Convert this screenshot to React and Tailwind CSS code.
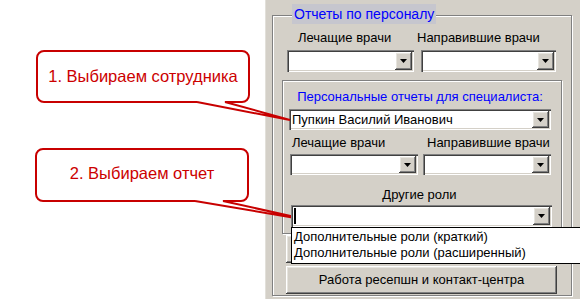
import React from "react";

const raised =
  "bg-[#d4d0c8] shadow-[inset_-1px_-1px_0_#404040,inset_1px_1px_0_#fff,inset_-2px_-2px_0_#808080,inset_2px_2px_0_#e6e4de]";
const sunken =
  "bg-white shadow-[inset_1px_1px_0_#808080,inset_2px_2px_0_#404040,inset_-1px_-1px_0_#fff,inset_-2px_-2px_0_#d4d0c8]";
const etched = "border border-[#808080] shadow-[inset_1px_1px_0_#fff,1px_1px_0_#fff]";

function Combo({ className = "", text, caret, children }) {
  return (
    <div className={`relative flex p-[2px] ${sunken} ${className}`}>
      <div className="flex-1 flex items-center pl-[1px] text-[13px] leading-[16px] text-black whitespace-nowrap overflow-hidden">
        {caret && <div className="w-[2px] h-[16px] bg-black" />}
        {text}
      </div>
      <div className={`w-[17px] flex items-center justify-center ${raised}`}>
        <svg width="7" height="4" viewBox="0 0 7 4">
          <path d="M0 0h7L3.5 4z" fill="#000" />
        </svg>
      </div>
      {children}
    </div>
  );
}

function Callout({ className = "", children }) {
  return (
    <div
      className={`w-[214px] border-2 border-[#c80000] rounded-[8px] flex items-center justify-center text-[16.5px] text-[#cc0000] bg-white ${className}`}
    >
      {children}
    </div>
  );
}

export default function App() {
  return (
    <div className="relative w-[580px] h-[299px] overflow-hidden bg-white flex font-['Liberation_Sans',Arial,sans-serif]">
      {/* подсказки слева */}
      <div className="w-[265px] flex flex-col">
        <Callout className="mt-[50px] ml-[36px] h-[53px]">1. Выбираем сотрудника</Callout>
        <Callout className="mt-[45px] ml-[35px] h-[54px] pb-[4px]">2. Выбираем отчет</Callout>
      </div>

      {/* форма */}
      <div className="w-[315px] h-[299px] bg-[#d4d0c8] pt-[15px] pl-[7px] border-l border-[#e2e0da]">
        <div className={`w-[300px] h-[281px] -ml-px flex flex-col ${etched}`}>
          <div className="-mt-[12px] ml-[19px] w-fit h-[20px] px-[2px] bg-[#c6c6ce] text-[#0000ff] text-[14px] leading-[20px]">
            Отчеты по персоналу
          </div>

          <div className="mt-[6px] flex text-[13px] leading-[16px] text-black">
            <div className="w-[144px] pl-[25px]">Лечащие врачи</div>
            <div>Направившие врачи</div>
          </div>
          <div className="mt-[4px] ml-[14px] flex">
            <Combo className="w-[127px] h-[22px]" />
            <Combo className="ml-[7px] w-[135px] h-[22px]" />
          </div>

          <div className={`mt-[8px] ml-[9px] w-[280px] h-[154px] flex flex-col ${etched}`}>
            <div className="mt-[8px] pr-[4px] text-center text-[13px] leading-[16px] text-[#0000ff]">
              Персональные отчеты для специалиста:
            </div>
            <Combo className="mt-[4px] ml-[6px] w-[262px] h-[21px]" text="Пупкин Василий Иванович" />
            <div className="mt-[5px] flex text-[13px] leading-[16px] text-black">
              <div className="w-[144px] pl-[9px]">Лечащие врачи</div>
              <div>Направившие врачи</div>
            </div>
            <div className="mt-[3px] ml-[7px] flex">
              <Combo className="w-[128px] h-[21px]" />
              <Combo className="ml-[5px] w-[128px] h-[21px]" />
            </div>
            <div className="mt-[12px] pr-[5px] text-center text-[13px] leading-[16px] text-black">Другие роли</div>
            <Combo className="mt-[2px] ml-[8px] w-[261px] h-[22px] z-10" caret>
              <div className="absolute left-0 top-full w-[300px] h-[37px] bg-white border border-black pl-[2px] pt-[1px] text-[13px] leading-[16px] text-black whitespace-nowrap">
                <div>Дополнительные роли (краткий)</div>
                <div>Дополнительные роли (расширенный)</div>
              </div>
            </Combo>
          </div>

          <div className={`mt-[1px] ml-[13px] w-[271px] h-[28px] ${raised}`} />
          <div
            className={`mt-[3px] ml-[13px] w-[271px] h-[28px] flex items-center justify-center text-[13px] text-black ${raised}`}
          >
            Работа ресепшн и контакт-центра
          </div>
        </div>
      </div>

      {/* стрелки подсказок */}
      <svg className="absolute inset-0 pointer-events-none" width="580" height="299">
        <polygon points="198,99 224,99 225,102 290,120 197,102" fill="#fff" />
        <polyline points="197,102 290,120 225,102" fill="none" stroke="#c80000" strokeWidth="2" strokeLinejoin="miter" />
        <polygon points="196,198 222,198 223,201 313,221 195,201" fill="#fff" />
        <polyline points="195,201 313,221 223,201" fill="none" stroke="#c80000" strokeWidth="2" strokeLinejoin="miter" />
      </svg>
    </div>
  );
}
